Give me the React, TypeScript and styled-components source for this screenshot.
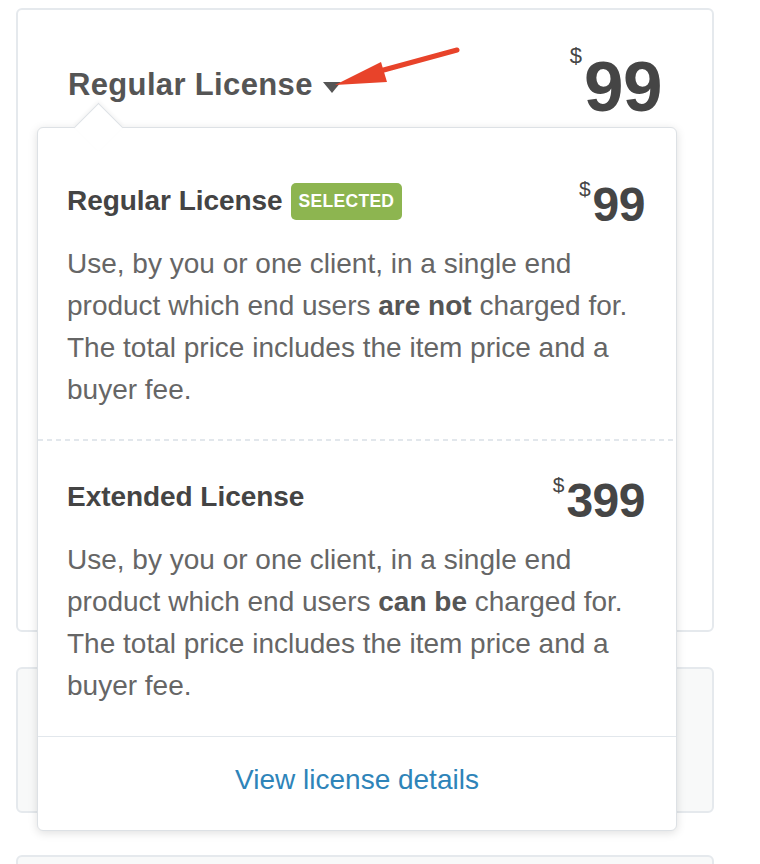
import React from "react";
import styled, { createGlobalStyle } from "styled-components";

const GlobalStyle = createGlobalStyle`
  html, body {
    margin: 0;
    padding: 0;
    background: #ffffff;
  }
  body {
    font-family: "Liberation Sans", Arial, Helvetica, sans-serif;
    -webkit-font-smoothing: antialiased;
  }
  * { box-sizing: border-box; }
`;

const Page = styled.div`
  position: relative;
  width: 760px;
  height: 864px;
  overflow: hidden;
  padding: 8px 0 0 16px;
  display: flex;
  flex-direction: column;
`;

const Card = styled.div<{ $height: number; $muted?: boolean; $gap?: number }>`
  position: relative;
  flex: none;
  width: 698px;
  height: ${(p) => p.$height}px;
  margin-top: ${(p) => p.$gap ?? 0}px;
  border: 2px solid #e5e9ed;
  border-radius: 6px;
  background: ${(p) => (p.$muted ? "#f8f9f9" : "#ffffff")};
  padding: 41px 50px 0 50px;
`;

const HeaderRow = styled.div`
  display: flex;
  justify-content: space-between;
  align-items: flex-start;
`;

const HeaderTitle = styled.div`
  display: flex;
  align-items: center;
  margin-top: 12px;
  font-size: 31px;
  line-height: 44px;
  font-weight: 700;
  letter-spacing: 0.35px;
  color: #555555;
`;

const CaretIcon = styled.svg`
  margin-left: 10px;
  margin-top: 5px;
  flex: none;
`;

const Price = styled.div<{ $size: number; $currency: number; $lift: number }>`
  display: flex;
  align-items: flex-start;
  color: #454545;

  span {
    font-size: ${(p) => p.$currency}px;
    line-height: 1;
    font-weight: 400;
    margin-top: ${(p) => -p.$lift}px;
    margin-right: 2px;
  }
  strong {
    font-size: ${(p) => p.$size}px;
    line-height: 1;
    font-weight: 700;
    letter-spacing: -0.5px;
  }
`;

const Dropdown = styled.div`
  position: absolute;
  left: 19px;
  top: 117px;
  width: 640px;
  background: #ffffff;
  border: 1px solid #dde1e5;
  border-radius: 6px;
  box-shadow: 0 2px 10px rgba(0, 0, 0, 0.13);
  z-index: 2;
`;

const DropdownCaret = styled.div`
  position: absolute;
  left: 43px;
  top: -18px;
  width: 35px;
  height: 35px;
  background: #ffffff;
  border-top: 1px solid #dde1e5;
  border-left: 1px solid #dde1e5;
  transform: rotate(45deg);
  box-shadow: -2px -2px 4px rgba(0, 0, 0, 0.04);
`;

const Section = styled.div<{ $top: number; $bottom: number }>`
  position: relative;
  padding: ${(p) => p.$top}px 31px ${(p) => p.$bottom}px 29px;
`;

const OptionRow = styled.div`
  display: flex;
  justify-content: space-between;
  align-items: flex-start;
`;

const OptionTitle = styled.div`
  display: flex;
  align-items: center;
  height: 40px;
  font-size: 28px;
  font-weight: 700;
  color: #444444;
  letter-spacing: -0.05px;
`;

const Badge = styled.span`
  display: inline-block;
  margin-left: 8px;
  height: 37px;
  padding: 0 8px;
  line-height: 37px;
  border-radius: 5px;
  background: #8db550;
  color: #ffffff;
  font-size: 17.5px;
  font-weight: 700;
  letter-spacing: 0.3px;
  text-transform: uppercase;
`;

const Description = styled.p`
  margin: 14px 0 0 0;
  font-size: 28px;
  line-height: 42px;
  color: #666666;

  b {
    font-weight: 700;
    color: #555555;
  }
`;

const DashedDivider = styled.div`
  height: 2px;
  background: repeating-linear-gradient(
    to right,
    #e2e7ec 0 5px,
    transparent 5px 9px
  );
`;

const Footer = styled.div`
  border-top: 1px solid #e2e7ec;
  padding: 22px 0 29px;
  text-align: center;
`;

const FooterLink = styled.a`
  font-size: 28px;
  line-height: 42px;
  color: #2e84b9;
  text-decoration: none;
`;

const ArrowOverlay = styled.svg`
  position: absolute;
  left: 330px;
  top: 40px;
  z-index: 3;
`;

export default function App() {
  return (
    <>
      <GlobalStyle />
      <Page>
        <Card $height={624}>
          <HeaderRow>
            <HeaderTitle>
              Regular License
              <CaretIcon width="18" height="11" viewBox="0 0 18 11">
                <path d="M0 0 H18 L9 11 Z" fill="#555555" />
              </CaretIcon>
            </HeaderTitle>
            <Price $size={71} $currency={22} $lift={6}>
              <span>$</span>
              <strong>99</strong>
            </Price>
          </HeaderRow>

          <Dropdown>
            <DropdownCaret />
            <Section $top={53} $bottom={28}>
              <OptionRow>
                <OptionTitle>
                  Regular License
                  <Badge>Selected</Badge>
                </OptionTitle>
                <Price $size={48} $currency={21} $lift={3}>
                  <span>$</span>
                  <strong>99</strong>
                </Price>
              </OptionRow>
              <Description>
                Use, by you or one client, in a single end product which end
                users <b>are not</b> charged for. The total price includes the
                item price and a buyer fee.
              </Description>
            </Section>
            <DashedDivider />
            <Section $top={36} $bottom={29}>
              <OptionRow>
                <OptionTitle>Extended License</OptionTitle>
                <Price $size={48} $currency={21} $lift={3}>
                  <span>$</span>
                  <strong>399</strong>
                </Price>
              </OptionRow>
              <Description>
                Use, by you or one client, in a single end product which end
                users <b>can be</b> charged for. The total price includes the
                item price and a buyer fee.
              </Description>
            </Section>
            <Footer>
              <FooterLink href="#">View license details</FooterLink>
            </Footer>
          </Dropdown>
        </Card>

        <Card $height={146} $gap={35} $muted />
        <Card $height={80} $gap={42} $muted />

        <ArrowOverlay width="135" height="55" viewBox="0 0 135 55">
          <line
            x1="127"
            y1="10"
            x2="50"
            y2="31"
            stroke="#e8432a"
            strokeWidth="5"
            strokeLinecap="round"
          />
          <polygon points="5,45 51,22 57,42" fill="#e8432a" />
        </ArrowOverlay>
      </Page>
    </>
  );
}
